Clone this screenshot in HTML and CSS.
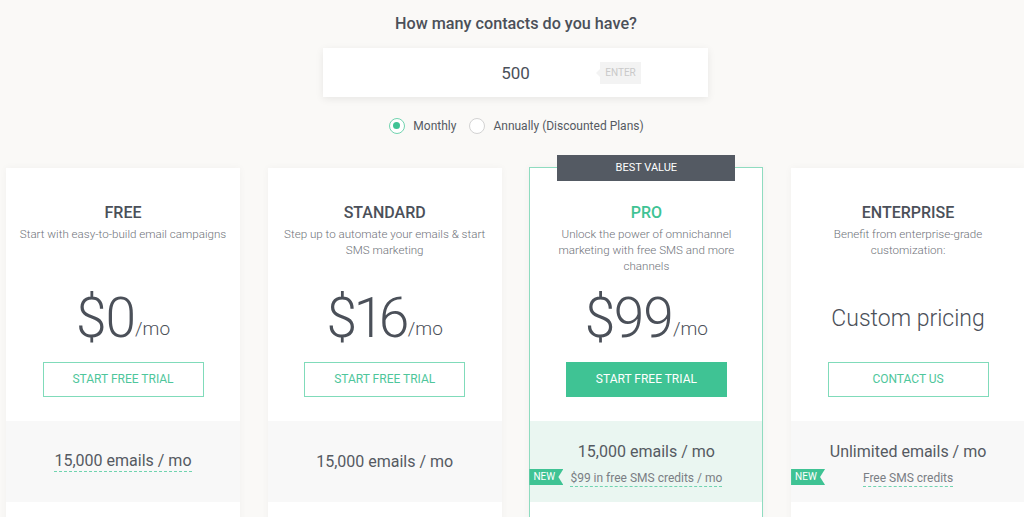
FILE: index.html
```html
<!DOCTYPE html>
<html lang="en">
<head>
  <meta charset="UTF-8">
  <title>Pricing</title>
  <link rel="stylesheet" href="styles.css">
</head>
<body>

<h1 class="question">How many contacts do you have?</h1>

<div class="contacts-box">
  <span class="contacts-value">500</span>
  <span class="enter-hint">ENTER</span>
</div>

<div class="billing">
  <label class="radio"><span class="dot checked"></span>Monthly</label>
  <label class="radio"><span class="dot"></span>Annually (Discounted Plans)</label>
</div>

<div class="plans">
  <div class="card">
    <h2 class="plan-name">FREE</h2>
    <p class="plan-desc">Start with easy-to-build email campaigns</p>
    <div class="price">$0<small>/mo</small></div>
    <a class="btn">START FREE TRIAL</a>
    <div class="features">
      <span class="volume dashed">15,000 emails / mo</span>
    </div>
  </div>

  <div class="card">
    <h2 class="plan-name">STANDARD</h2>
    <p class="plan-desc">Step up to automate your emails &amp; start SMS marketing</p>
    <div class="price">$16<small>/mo</small></div>
    <a class="btn">START FREE TRIAL</a>
    <div class="features">
      <span class="volume">15,000 emails / mo</span>
    </div>
  </div>

  <div class="card featured">
    <div class="badge">BEST VALUE</div>
    <h2 class="plan-name">PRO</h2>
    <p class="plan-desc">Unlock the power of omnichannel marketing with free SMS and more channels</p>
    <div class="price">$99<small>/mo</small></div>
    <a class="btn filled">START FREE TRIAL</a>
    <div class="features two">
      <span class="tag">NEW</span>
      <span class="volume">15,000 emails / mo</span>
      <span class="extra">$99 in free SMS credits / mo</span>
    </div>
  </div>

  <div class="card">
    <h2 class="plan-name">ENTERPRISE</h2>
    <p class="plan-desc">Benefit from enterprise-grade customization:</p>
    <div class="price custom">Custom pricing</div>
    <a class="btn">CONTACT US</a>
    <div class="features two">
      <span class="tag">NEW</span>
      <span class="volume">Unlimited emails / mo</span>
      <span class="extra">Free SMS credits</span>
    </div>
  </div>
</div>

</body>
</html>
```

FILE: styles.css
```css
body {
  margin: 0;
  background: #faf9f7;
  color: #4b5059;
  font-family: Roboto, "Liberation Sans", sans-serif;
  overflow: hidden;
}
.question {
  margin: 14px 0 0;
  font-size: 16.2px;
  font-weight: 500;
  line-height: 20px;
  text-align: center;
  padding-left: 8px;
}
.contacts-box {
  position: relative;
  width: 385px;
  height: 49px;
  margin: 14px 0 0 calc(50% - 189px);
  background: #fff;
  box-shadow: 0 2px 8px rgba(0, 0, 0, 0.08);
  display: flex;
  align-items: center;
  justify-content: center;
}
.contacts-value {
  font-size: 17px;
}
/* подсказка справа от поля */
.enter-hint {
  position: absolute;
  left: 277px;
  top: 14px;
  width: 41px;
  height: 22px;
  line-height: 22px;
  text-align: center;
  font-size: 10px;
  color: #c9c9c9;
  background: #f3f3f3;
}
.enter-hint::before {
  content: "";
  position: absolute;
  left: -4px;
  top: 7px;
  border-top: 4px solid transparent;
  border-bottom: 4px solid transparent;
  border-right: 4px solid #f3f3f3;
}
.billing {
  display: flex;
  justify-content: center;
  gap: 13px;
  margin-top: 21px;
  padding-left: 9px;
}
.radio {
  display: flex;
  align-items: center;
  gap: 8px;
  font-size: 12px;
  color: #555a62;
}
.dot {
  box-sizing: border-box;
  width: 16px;
  height: 16px;
  border-radius: 50%;
  border: 1px solid #d3d3d3;
  background: #fff;
  position: relative;
}
.dot.checked {
  border: 1.5px solid #72d4b0;
}
.dot.checked::after {
  content: "";
  position: absolute;
  left: 3px;
  top: 3px;
  width: 7px;
  height: 7px;
  border-radius: 50%;
  background: #3fc394;
}
.plans {
  display: flex;
  gap: 27.7px;
  margin-top: 34px;
  padding-left: 6px;
}
.card {
  position: relative;
  flex: 0 0 234px;
  box-sizing: border-box;
  height: 400px;
  padding-top: 34px;
  background: #fff;
  text-align: center;
  box-shadow: 0 0 8px rgba(0, 0, 0, 0.04);
}
.card.featured {
  border: 1px solid #8fdcc0;
  margin-top: -1px;
  padding-top: 34px;
}
.badge {
  position: absolute;
  left: 27px;
  top: -13px;
  width: 178px;
  height: 26px;
  line-height: 26px;
  background: #545a63;
  color: #fff;
  font-size: 11px;
}
.plan-name {
  margin: 0;
  font-size: 16px;
  font-weight: 500;
  line-height: 20px;
  padding-top: 1px;
}
.featured .plan-name {
  color: #3fc394;
}
.plan-desc {
  height: 48px;
  margin: 3px 8px 0;
  font-size: 11.6px;
  font-weight: 300;
  line-height: 16px;
  color: #6f737a;
}
.price {
  height: 88px;
  display: flex;
  align-items: center;
  justify-content: center;
  font-size: 55px;
  font-weight: 300;
  line-height: 1;
  letter-spacing: -1.5px;
  font-variant-numeric: proportional-nums;
}
.price small {
  font-size: 19px;
  letter-spacing: 0;
  align-self: center;
  margin-top: 20px;
}
.price.custom {
  font-size: 23px;
  letter-spacing: 0;
}
.btn {
  display: block;
  box-sizing: border-box;
  width: 161px;
  height: 35px;
  margin: 0 auto;
  border: 1px solid #80dbba;
  color: #4ec69b;
  font-size: 12px;
  line-height: 33px;
}
.btn.filled {
  background: #3fc394;
  border-color: #3fc394;
  color: #fff;
}
.features {
  position: relative;
  height: 81px;
  margin-top: 24px;
  background: #f8f8f8;
  display: flex;
  flex-direction: column;
  align-items: center;
  justify-content: center;
}
.featured .features {
  background: #eaf6f1;
}
.features.two {
  justify-content: flex-start;
  padding-top: 21px;
  box-sizing: border-box;
}
.volume {
  font-size: 16px;
  line-height: 20px;
  color: #555a62;
}
.dashed,
.extra {
  border-bottom: 1px dashed #6fd4b0;
}
.extra {
  margin-top: 9px;
  font-size: 12px;
  line-height: 15px;
  color: #7a7e84;
}
/* зелёная ленточка NEW */
.tag {
  position: absolute;
  left: 0;
  top: 48px;
  width: 34px;
  height: 16px;
  line-height: 16px;
  padding-left: 4px;
  box-sizing: border-box;
  text-align: left;
  font-size: 10px;
  color: #fff;
  background: #3fc394;
  clip-path: polygon(0 0, 100% 0, calc(100% - 5px) 50%, 100% 100%, 0 100%);
}
.featured .tag {
  left: -1px;
}
```
